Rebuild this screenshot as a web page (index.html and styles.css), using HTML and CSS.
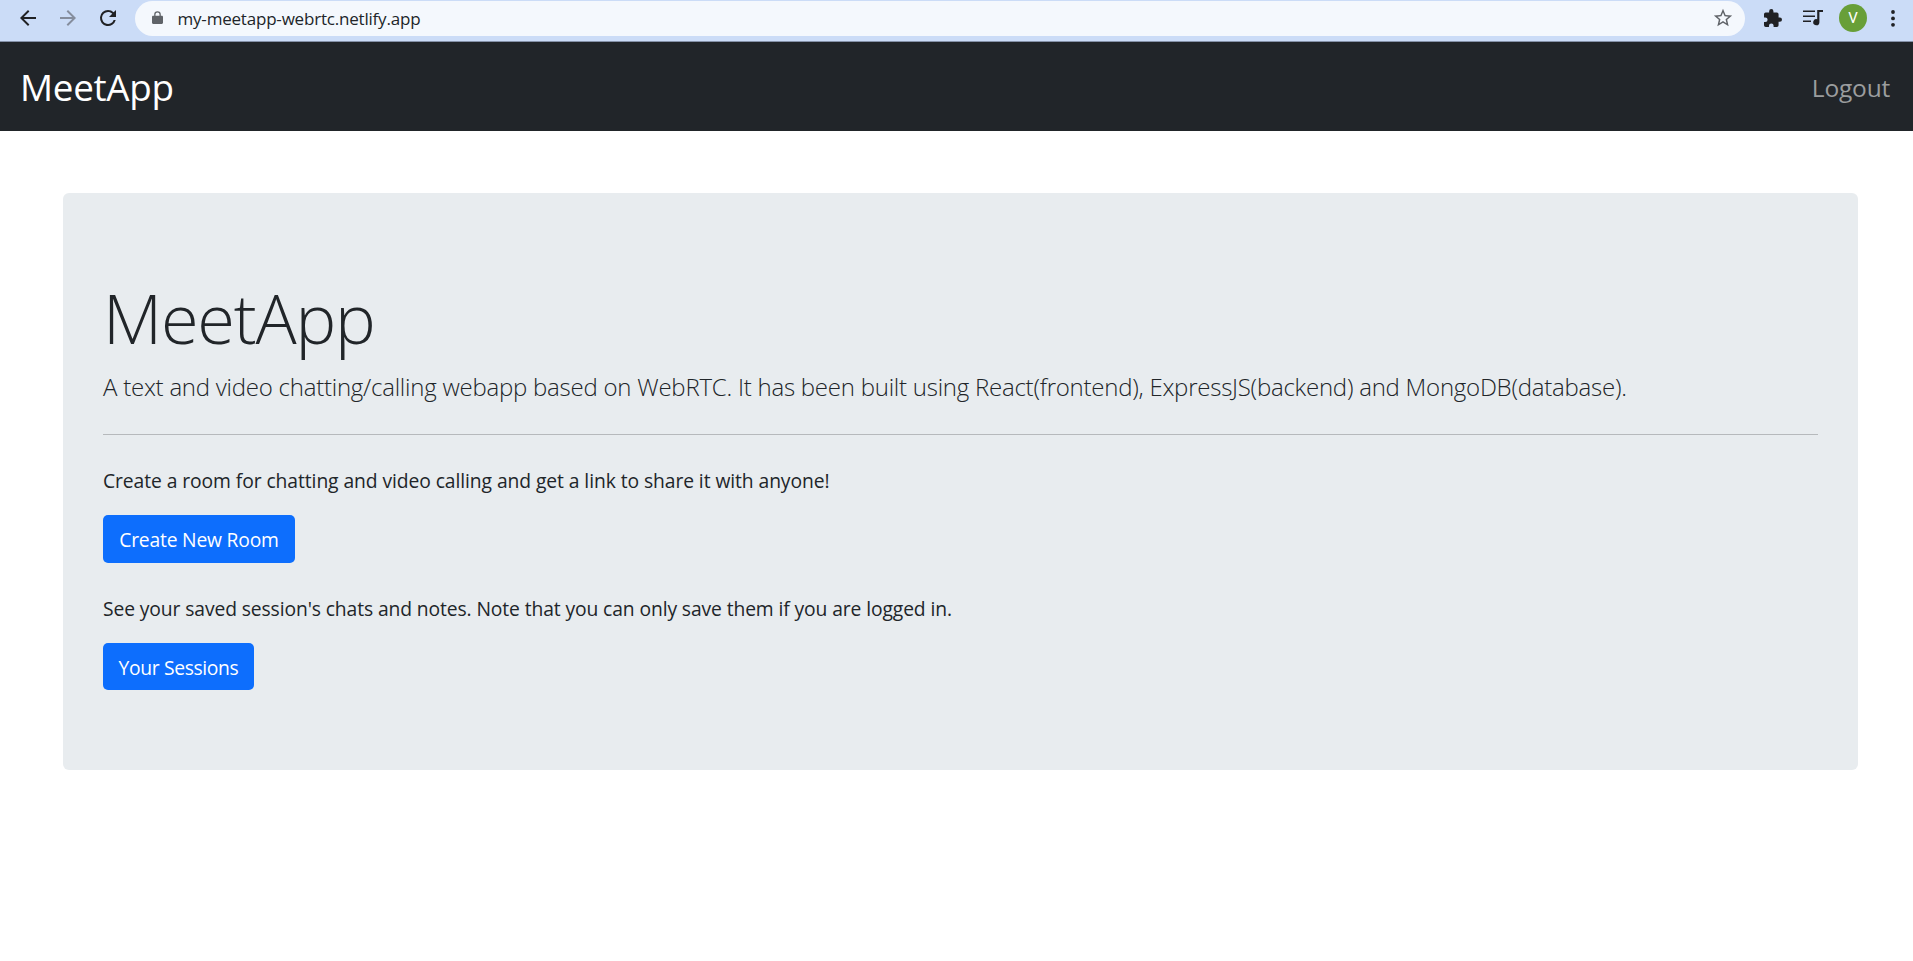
FILE: index.html
```html
<!DOCTYPE html>
<html lang="en">
<head>
<meta charset="utf-8">
<title>MeetApp</title>
<link rel="stylesheet" href="styles.css">
</head>
<body>
<header class="toolbar">
  <svg class="nav-icon" viewBox="0 0 24 24"><path d="M20 11H7.800l5.600-5.600L12 4l-8 8 8 8 1.400-1.400L7.800 13H20z"/></svg>
  <svg class="nav-icon nav-icon-off" viewBox="0 0 24 24"><path d="M4 11h12.200l-5.600-5.600L12 4l8 8-8 8-1.400-1.400 5.600-5.600H4z"/></svg>
  <svg class="nav-icon nav-icon-reload" viewBox="0 0 24 24"><path d="M17.650 6.350A7.960 7.960 0 0 0 12 4a8 8 0 1 0 7.730 10h-2.080A6 6 0 1 1 12 6c1.660 0 3.140.69 4.220 1.780L13 11h7V4z"/></svg>
  <div class="address">
    <svg class="lock" viewBox="0 0 12 15"><path d="M1.300 5H2.400V3.800a3.600 3.600 0 0 1 7.200 0V5h1.100c.7 0 1.300.6 1.300 1.300v6.400c0 .7-.6 1.300-1.300 1.300H1.300C.6 14 0 13.400 0 12.700V6.300C0 5.600.6 5 1.300 5zM3.800 5h4.400V3.800a2.200 2.200 0 0 0-4.400 0z"/></svg>
    <span class="url">my-meetapp-webrtc.netlify.app</span>
    <svg class="star" viewBox="0 0 24 24"><path d="M22 9.240l-7.190-.62L12 2 9.190 8.630 2 9.240l5.460 4.730L5.820 21 12 17.270 18.180 21l-1.630-7.030zM12 15.400l-3.760 2.270 1-4.280-3.320-2.880 4.380-.38L12 6.100l1.710 4.040 4.380.38-3.320 2.880 1 4.280z"/></svg>
  </div>
  <svg class="tool puzzle" viewBox="2 1 21 21"><path d="M20.500 11H19V7a2 2 0 0 0-2-2h-4V3.500a2.500 2.500 0 0 0-5 0V5H4a2 2 0 0 0-2 2v3.800h1.500a2.700 2.700 0 0 1 0 5.400H2V20a2 2 0 0 0 2 2h3.800v-1.500a2.700 2.700 0 0 1 5.400 0V22H17a2 2 0 0 0 2-2v-4h1.500a2.500 2.500 0 0 0 0-5z"/></svg>
  <svg class="tool queue" viewBox="0 0 20 16"><path d="M0 .5h12V2H0zM0 5.500h12V7H0zM0 10.500h8V12H0zM14.200 0H20v2h-3.600v10.200a3.100 3.100 0 1 1-2.200-3z"/></svg>
  <span class="avatar">V</span>
  <svg class="dots" viewBox="0 0 4 17"><circle cx="2" cy="2" r="1.900"/><circle cx="2" cy="8.400" r="1.900"/><circle cx="2" cy="14.800" r="1.900"/></svg>
</header>
<nav class="navbar">
  <a class="brand">MeetApp</a>
  <a class="logout">Logout</a>
</nav>
<main class="jumbotron">
  <h1 class="title">MeetApp</h1>
  <p class="lead">A text and video chatting/calling webapp based on WebRTC. It has been built using React(frontend), ExpressJS(backend) and MongoDB(database).</p>
  <hr class="rule">
  <p class="text text-room">Create a room for chatting and video calling and get a link to share it with anyone!</p>
  <button class="btn btn-room">Create New Room</button>
  <p class="text text-sessions">See your saved session's chats and notes. Note that you can only save them if you are logged in.</p>
  <button class="btn btn-sessions">Your Sessions</button>
</main>
</body>
</html>
```
FILE: styles.css
```css
* { box-sizing: border-box; }
body {
  margin: 0;
  background: #fff;
  color: #212529;
  font-family: "Open Sans", "Noto Sans", sans-serif;
  font-size: 19.300px;
}
.toolbar {
  display: flex;
  align-items: center;
  height: 42px;
  padding: 0 18px 5px 15.500px;
  background: #cbdcf7;
  border-bottom: 1px solid #8592a8;
}
.nav-icon { flex: none; width: 24px; height: 24px; margin-right: 16px; fill: #202124; }
.nav-icon-off { fill: #858d9d; }
.nav-icon-reload { margin-right: 15.500px; }
.address {
  display: flex;
  align-items: center;
  flex: 1;
  height: 35px;
  padding: 0 11px 0 17px;
  border-radius: 18px;
  background: #f4f8fd;
}
.lock { width: 11px; height: 14px; fill: #5f6368; }
.url { margin-left: 14.500px; flex: none; font-size: 17px; letter-spacing: -0.200px; }
.star { width: 22px; height: 22px; margin-left: auto; fill: #5f6368; }
.tool { flex: none; fill: #202124; }
.puzzle { width: 18px; height: 18px; margin-left: 19px; }
.queue { width: 20px; height: 16px; margin-left: 21px; }
.avatar {
  flex: none;
  width: 28px;
  height: 28px;
  margin-left: 16px;
  border-radius: 50%;
  background: #689f38;
  color: #fff;
  font: 15px/28px Roboto, sans-serif;
  text-align: center;
}
.dots { flex: none; width: 4px; height: 17px; margin-left: 24px; fill: #202124; }
.navbar {
  display: flex;
  align-items: center;
  justify-content: space-between;
  height: 89px;
  padding: 0 23px 0 20px;
  background: #212529;
}
.brand { color: #fff; font-size: 36.800px; letter-spacing: -0.300px; }
.logout { padding-top: 1px; color: #9b9d9e; font-size: 24.500px; letter-spacing: -0.200px; }
.jumbotron {
  height: 577px;
  margin: 62px 55px 0 63px;
  padding: 80px 40px;
  border-radius: 6px;
  background: #e8ecef;
}
.title { margin: 0; font-size: 68.500px; font-weight: 300; line-height: 90px; letter-spacing: -1.200px; }
.lead {
  margin: 5px 0 0;
  font-size: 24px;
  font-weight: 300;
  line-height: 38px;
  letter-spacing: -0.240px;
  white-space: nowrap;
}
.rule { margin: 28px 0 31px; border: 0; height: 1px; background: #b6b9bc; }
.text { margin: 0 0 19px; line-height: 30px; letter-spacing: -0.080px; }
.text-sessions { margin-top: 31px; letter-spacing: -0.110px; }
.btn {
  display: block;
  height: 48px;
  padding: 1px 0 0;
  border: 0;
  border-radius: 5px;
  background: #0d6efd;
  color: #fff;
  font-family: inherit;
  font-size: 19.300px;
  line-height: 47px;
  text-align: center;
}
.btn-room { width: 192px; letter-spacing: -0.200px; }
.btn-sessions { width: 151px; height: 47px; letter-spacing: -0.350px; }
```
